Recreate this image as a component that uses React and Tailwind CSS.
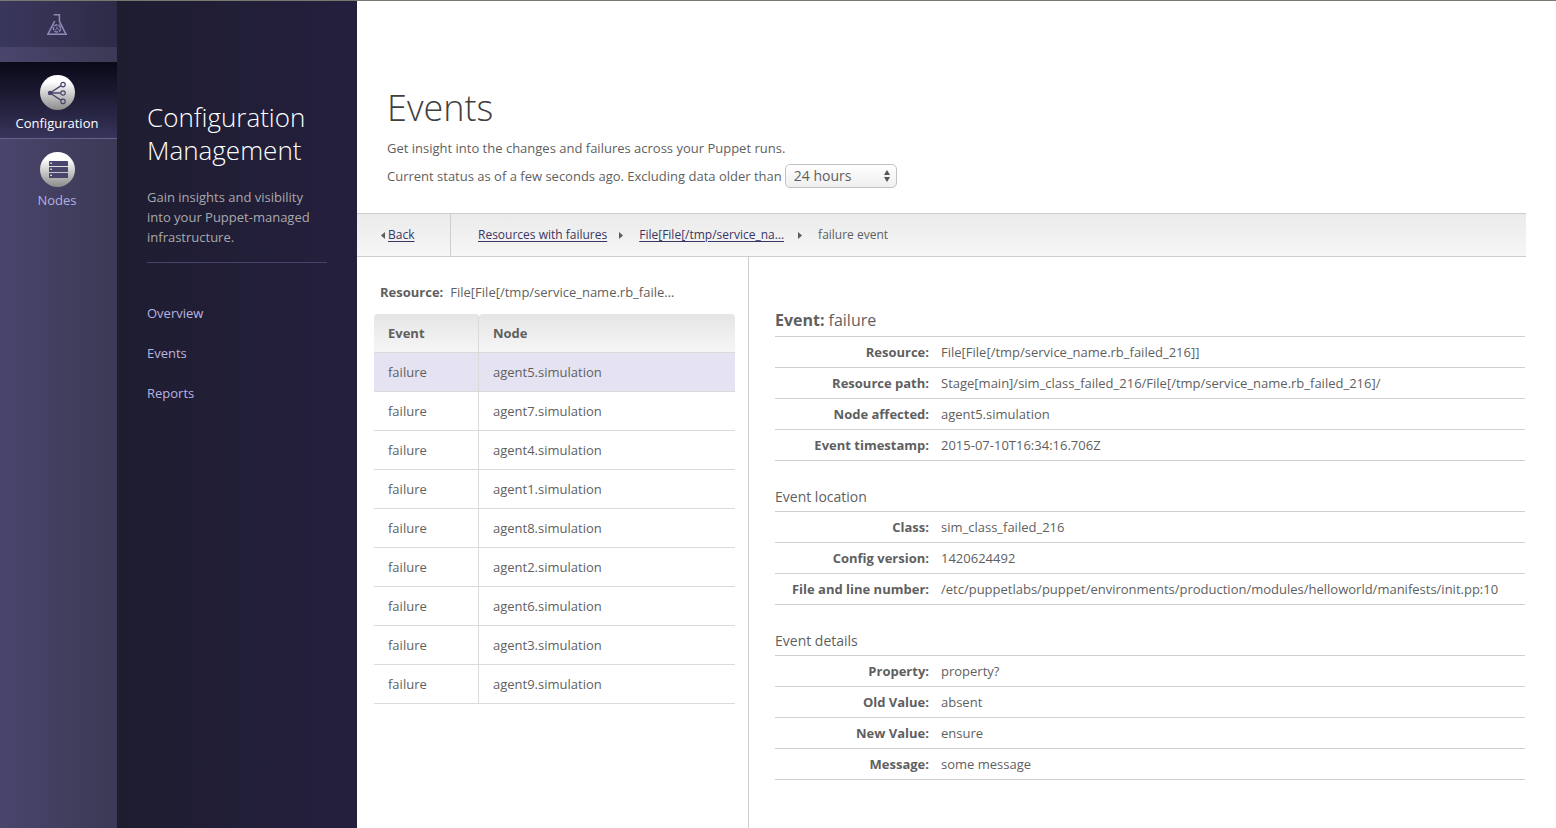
const events = [
  'agent5.simulation',
  'agent7.simulation',
  'agent4.simulation',
  'agent1.simulation',
  'agent8.simulation',
  'agent2.simulation',
  'agent6.simulation',
  'agent3.simulation',
  'agent9.simulation',
];

const eventRows = [
  ['Resource:', 'File[File[/tmp/service_name.rb_failed_216]]'],
  ['Resource path:', 'Stage[main]/sim_class_failed_216/File[/tmp/service_name.rb_failed_216]/'],
  ['Node affected:', 'agent5.simulation'],
  ['Event timestamp:', '2015-07-10T16:34:16.706Z'],
];

const locationRows = [
  ['Class:', 'sim_class_failed_216'],
  ['Config version:', '1420624492'],
  ['File and line number:', '/etc/puppetlabs/puppet/environments/production/modules/helloworld/manifests/init.pp:10'],
];

const detailRows = [
  ['Property:', 'property?'],
  ['Old Value:', 'absent'],
  ['New Value:', 'ensure'],
  ['Message:', 'some message'],
];

function FlaskIcon() {
  return (
    <svg width="22" height="23" viewBox="0 0 22 23" fill="none" stroke="#8d89b5" aria-hidden="true">
      <path d="M7.6 1.7H13.4V8.4L19.6 20.6M8.7 8L2.2 20.6" strokeWidth="1.6" />
      <path d="M1 21.2H21" strokeWidth="1.6" />
      <circle cx="11" cy="15.4" r="3.6" strokeWidth="1.5" strokeDasharray="3.6 0.9" />
      <path d="M11 13.4V15.6L9.4 16.6M11 15.6L12.8 16.4" strokeWidth="0.9" />
      <path d="M8.4 12.8L7.4 11.6M13.2 12.4L13.8 11.4" strokeWidth="1" />
    </svg>
  );
}

function ShareIcon() {
  return (
    <svg width="35" height="35" viewBox="0 0 35 35" fill="none" stroke="#48446b" aria-hidden="true">
      <path d="M10 18L20.8 10.9M10 18H20.5M10 18L20.8 25.1" strokeWidth="1.3" />
      <circle cx="10" cy="18" r="2.2" fill="#48446b" stroke="none" />
      <circle cx="23" cy="9.6" r="2.2" strokeWidth="1.2" />
      <circle cx="23" cy="18" r="2.2" strokeWidth="1.2" />
      <circle cx="23" cy="26.4" r="2.2" strokeWidth="1.2" />
    </svg>
  );
}

function ServerIcon() {
  return (
    <svg width="35" height="35" viewBox="0 0 35 35" aria-hidden="true">
      {[9, 15, 21].map((y) => (
        <g key={y}>
          <rect x="9" y={y} width="19" height="5" rx="0.6" fill="#48446b" />
          <rect x="10.2" y={y + 1.6} width="1.8" height="1.4" fill="#d5d5dc" />
        </g>
      ))}
    </svg>
  );
}

function Triangle({ left }) {
  return (
    <svg width="4" height="7" viewBox="0 0 4 7" fill="#5c5c5c" aria-hidden="true">
      <path d={left ? 'M4 0V7L0 3.5Z' : 'M0 0V7L4 3.5Z'} />
    </svg>
  );
}

function DetailTable({ rows, label }) {
  return (
    <table aria-label={label} className="w-full border-collapse border-t border-[#cfcfcf]">
      <tbody>
        {rows.map(([name, value]) => (
          <tr key={name} className="h-[31px] border-b border-[#cfcfcf]">
            <th scope="row" className="w-[154px] p-0 text-right font-bold whitespace-nowrap">{name}</th>
            <td className="py-0 pr-2 pl-3">{value}</td>
          </tr>
        ))}
      </tbody>
    </table>
  );
}

const link = 'text-[#3a3663] underline underline-offset-2';
const circle = 'block rounded-full bg-linear-to-b from-white from-20% to-[#8c8c8c]';

export default function App() {
  return (
    <div className="flex min-h-screen border-t border-[#77786f] bg-white font-['Open_Sans',sans-serif] text-[13px] leading-5 text-[#5f5f5f]">
      <nav aria-label="Sections" className="w-[117px] shrink-0 bg-linear-to-r from-[#49456c] to-[#3b3955]">
        <div className="flex h-[46px] items-center justify-center bg-linear-to-r from-[#3a375d] to-[#2e2b48] pr-[3px]">
          <FlaskIcon />
        </div>
        <a href="#configuration" className="mt-[15px] flex h-[77px] flex-col items-center border-b border-[#65618a] bg-linear-to-b from-[#0a0918] to-[#37345a] pr-[3px] pt-[13px] font-medium text-white">
          <span className={circle}><ShareIcon /></span>
          <span className="mt-[3px]">Configuration</span>
        </a>
        <a href="#nodes" className="flex h-[77px] flex-col items-center pr-[3px] pt-[13px] font-medium text-[#b5afe0]">
          <span className={circle}><ServerIcon /></span>
          <span className="mt-[3px]">Nodes</span>
        </a>
      </nav>

      <aside className="w-[240px] shrink-0 bg-linear-to-r from-[#1e1d30] to-[#241f3e] px-[30px] pt-[100px]">
        <h2 className="text-[26px] leading-[33px] font-light text-white">Configuration Management</h2>
        <p className="mt-5 border-b border-[#46426a] pb-[15px] text-[#a9a9ac]">
          Gain insights and visibility into your Puppet-managed infrastructure.
        </p>
        <ul className="mt-[30px] font-medium text-[#b9b3e0]">
          {['Overview', 'Events', 'Reports'].map((name) => (
            <li key={name} className="flex h-10 items-center">
              <a href={'#' + name.toLowerCase()}>{name}</a>
            </li>
          ))}
        </ul>
      </aside>

      <main className="flex min-w-0 flex-1 flex-col pr-[30px]">
        <header className="h-[212px] px-[30px] pt-[82px]">
          <h1 className="text-[36px] leading-[50px] font-light text-[#3f3f3f]">Events</h1>
          <p className="mt-[5px]">Get insight into the changes and failures across your Puppet runs.</p>
          <div className="mt-[6px] flex items-center gap-[3px]">
            <label htmlFor="age">Current status as of a few seconds ago. Excluding data older than</label>
            <span className="relative inline-flex">
              <select id="age" defaultValue="24 hours" className="h-6 w-28 appearance-none rounded-[5px] border border-[#c2c2c2] bg-linear-to-b from-white to-[#efefef] pl-2 text-[14px] leading-5 text-[#5f5f5f]">
                <option>24 hours</option>
              </select>
              <svg className="pointer-events-none absolute top-[6px] right-[7px]" width="6" height="12" viewBox="0 0 6 12" fill="#555" aria-hidden="true">
                <path d="M3 0L6 5H0ZM3 12L6 7H0Z" />
              </svg>
            </span>
          </div>
        </header>

        <nav aria-label="Breadcrumb" className="flex h-11 shrink-0 items-stretch border-y border-[#cdcdcd] bg-linear-to-b from-[#ebebeb] to-[#f6f6f6] text-[12px]">
          <div className="flex w-[94px] items-center gap-[3px] border-r border-[#cdcdcd] pl-6">
            <Triangle left />
            <a href="#back" className={link}>Back</a>
          </div>
          <div className="flex items-center pl-[27px]">
            <a href="#resources" className={link}>Resources with failures</a>
            <span className="mr-4 ml-3"><Triangle /></span>
            <a href="#file" className={link}>File[File[/tmp/service_na…</a>
            <span className="mr-4 ml-[14px]"><Triangle /></span>
            <span>failure event</span>
          </div>
        </nav>

        <div className="flex flex-1">
          <section className="w-[392px] shrink-0 border-r border-[#cdcdcd] pt-[25px] pr-[13px] pl-[17px]">
            <p className="flex gap-[7px] pl-[6px]">
              <strong className="font-bold">Resource:</strong>
              <span>File[File[/tmp/service_name.rb_faile…</span>
            </p>
            <table className="mt-3 w-full table-fixed border-separate border-spacing-0 text-left">
              <thead>
                <tr className="h-[39px]">
                  <th scope="col" className="w-[105px] rounded-t border-r border-b border-[#dadada] border-t-0 bg-linear-to-b from-[#e5e5e5] to-[#f6f6f6] py-0 pl-[14px] font-bold">Event</th>
                  <th scope="col" className="rounded-t border-b border-[#dadada] bg-linear-to-b from-[#e5e5e5] to-[#f6f6f6] py-0 pl-[14px] font-bold">Node</th>
                </tr>
              </thead>
              <tbody>
                {events.map((node) => (
                  <tr key={node} className="h-[39px] first:bg-[#e5e3f2]">
                    <td className="border-r border-b border-[#dadada] py-0 pl-[14px]">failure</td>
                    <td className="border-b border-[#dadada] py-0 pl-[14px]">{node}</td>
                  </tr>
                ))}
              </tbody>
            </table>
          </section>

          <section className="min-w-0 flex-1 pt-[47px] pr-px pl-[26px]">
            <h2 className="flex h-8 items-center gap-1 text-[16px]">
              <strong className="font-bold">Event:</strong>
              <span>failure</span>
            </h2>
            <DetailTable rows={eventRows} label="Event" />
            <h3 className="mt-[22px] flex h-7 items-center text-[14px]">Event location</h3>
            <DetailTable rows={locationRows} label="Event location" />
            <h3 className="mt-[22px] flex h-7 items-center text-[14px]">Event details</h3>
            <DetailTable rows={detailRows} label="Event details" />
          </section>
        </div>
      </main>
    </div>
  );
}
